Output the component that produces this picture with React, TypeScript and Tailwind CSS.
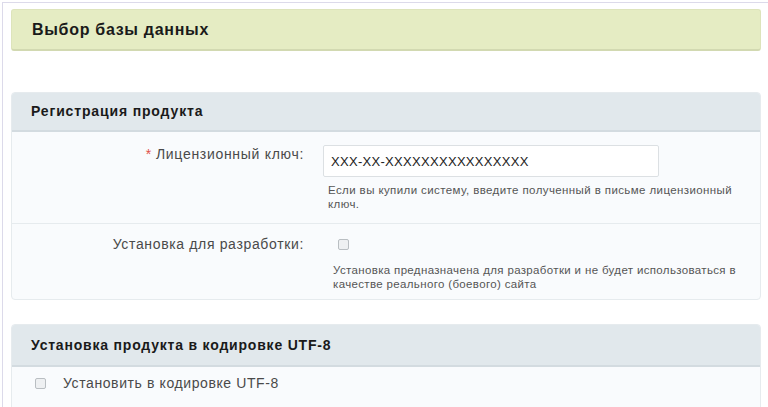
export default function App() {
  return (
    <div className="w-[768px] h-[407px] overflow-hidden bg-white pl-[2px] pt-[2px] [font-family:'Liberation_Sans',Arial,sans-serif]">
      <div className="h-full border-t border-l border-[#dcdaea] pl-[8px] pr-[7px] pt-[6px]">
        {/* page title */}
        <div className="h-[42px] flex items-center pl-[20px] bg-[#e5ecc3] border border-[#dde4bb] border-b-2 border-b-[#d2d9b1] rounded-[3px]">
          <h1 className="text-[16px] font-bold tracking-[0.7px] text-[#1a1a1a]">Выбор базы данных</h1>
        </div>

        <div className="h-[41px]"></div>

        {/* registration */}
        <div className="rounded-[4px] border border-[#e6ebee] bg-[#f9fbfd] overflow-hidden">
          <div className="h-[39px] flex items-center pl-[19px] bg-[#e1e8ec] border-b-2 border-[#d3dbe0]">
            <h2 className="text-[14px] font-bold tracking-[0.85px] text-[#1a1a1a]">Регистрация продукта</h2>
          </div>

          <div className="grid grid-cols-[292px_1fr] gap-x-[19px] pt-[13px] pb-[12px] border-b border-[#e6ebee]">
            <div className="text-right text-[14px] leading-[18px] tracking-[0.7px] text-[#4a4a4a]">
              <span className="text-[#e0504a] mr-[4px]">*</span>Лицензионный ключ:
            </div>
            <div>
              <input
                defaultValue="XXX-XX-XXXXXXXXXXXXXXXX"
                className="block w-[336px] h-[32px] px-[7px] text-[13px] tracking-[0.3px] text-[#222] bg-white border border-[#dce0e3] rounded-[2px] outline-none"
              />
              <p className="mt-[6px] ml-[5px] w-[425px] text-[11.5px] leading-[14px] tracking-[0.4px] text-[#555]">
                Если вы купили систему, введите полученный в письме лицензионный ключ.
              </p>
            </div>
          </div>

          <div className="grid grid-cols-[292px_1fr] gap-x-[19px] pt-[11px] pb-[8px]">
            <div className="text-right text-[14px] leading-[18px] tracking-[0.65px] text-[#4a4a4a]">Установка для разработки:</div>
            <div>
              <div className="ml-[15px] mt-[4px] w-[11px] h-[11px] rounded-[2px] border border-[#b9bec2] bg-[#eef0f2]"></div>
              <p className="mt-[13px] ml-[10px] w-[425px] text-[11.5px] leading-[14px] tracking-[0.35px] text-[#555]">
                Установка предназначена для разработки и не будет использоваться в качестве реального (боевого) сайта
              </p>
            </div>
          </div>
        </div>

        <div className="h-[24px]"></div>

        {/* utf-8 */}
        <div className="rounded-[4px] border border-[#e6ebee] bg-[#f9fbfd] overflow-hidden">
          <div className="h-[42px] flex items-center pl-[19px] bg-[#e1e8ec] border-b-2 border-[#d3dbe0]">
            <h2 className="text-[14px] font-bold tracking-[0.8px] text-[#1a1a1a]">Установка продукта в кодировке UTF-8</h2>
          </div>
          <label className="flex items-center h-[32px] pl-[23px]">
            <span className="w-[11px] h-[11px] rounded-[2px] border border-[#b9bec2] bg-[#eef0f2]"></span>
            <span className="ml-[17px] text-[14px] tracking-[0.6px] text-[#4a4a4a]">Установить в кодировке UTF-8</span>
          </label>
          <div className="h-[20px]"></div>
        </div>
      </div>
    </div>
  );
}
